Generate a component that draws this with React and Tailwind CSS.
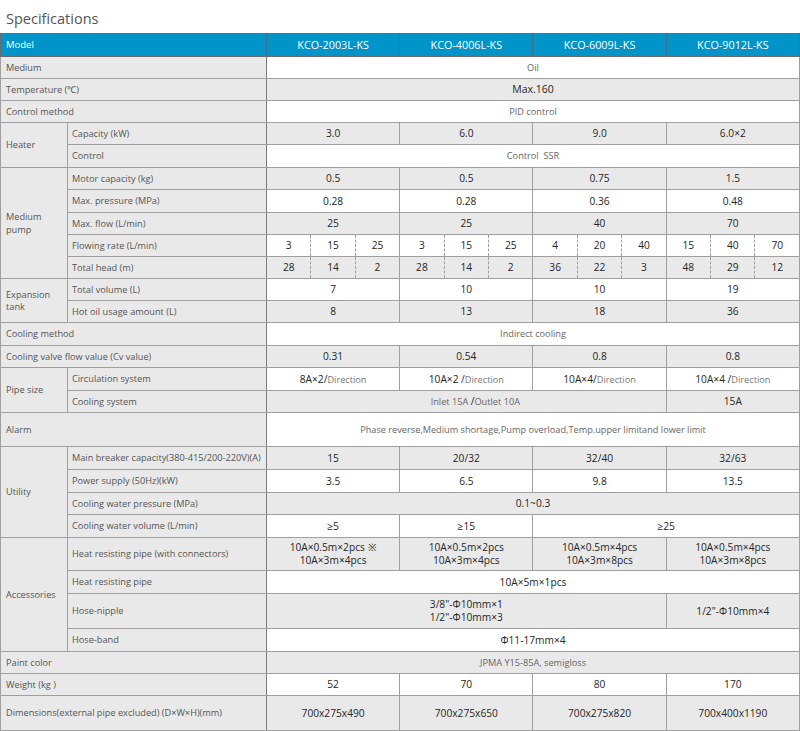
import React from "react";

const B = "border border-[#9f9f9f]";
const LBL = `${B} bg-[#e9e9e9] text-[#555] text-[9.2px] text-left align-middle p-0 pl-[5px] font-normal`;
const SUB = `${B} bg-[#e9e9e9] text-[#555] text-[9.2px] text-left align-middle p-0 pl-[4px] border-r-[#7a7a7a] font-normal`;
const LBL2 = `${LBL} border-r-[#7a7a7a]`;
const V = `${B} text-center align-middle p-0 text-[10.2px] text-[#262626]`;
const G = `${B} text-center align-middle p-0 text-[9.2px] text-[#666]`;

const W = "bg-white";
const GR = "bg-[#e9e9e9]";

function Vals({ vals, bg }) {
  return vals.map((v, i) => (
    <td key={i} colSpan={3} className={`${V} ${bg}`}>
      {v}
    </td>
  ));
}

function Sub3({ vals, bg }) {
  return vals.map((v, i) => {
    const pos = i % 3;
    const cls =
      pos === 0
        ? "[border-right-style:dashed]"
        : pos === 1
        ? "[border-left-style:dashed] [border-right-style:dashed]"
        : "[border-left-style:dashed]";
    return (
      <td key={i} className={`${V} ${bg} ${cls}`}>
        {v}
      </td>
    );
  });
}

function Dir({ a }) {
  return (
    <span>
      <span className="text-[#262626] text-[10.2px]">{a}</span>
      <span className="text-[#777] text-[9.2px]">Direction</span>
    </span>
  );
}

export default function App() {
  return (
    <div className="w-[800px] bg-white font-['Open_Sans',sans-serif] leading-[1.2]">
      <div className="h-[33px] pl-[6px] pt-[10px] text-[14.5px] leading-[18px] text-[#555]">
        Specifications
      </div>
      <table className="w-[800px] table-fixed border-collapse">
        <colgroup>
          <col className="w-[67px]" />
          <col className="w-[199px]" />
          {Array.from({ length: 12 }).map((_, i) => (
            <col key={i} />
          ))}
        </colgroup>
        <tbody>
          <tr className="h-[23px] bg-[#0094c9]">
            <th colSpan={2} className="border border-[#6b6b6b] border-r-[#3d6f86] text-left pl-[5px] text-[9.5px] font-normal text-white p-0">
              Model
            </th>
            {["KCO-2003L-KS", "KCO-4006L-KS", "KCO-6009L-KS", "KCO-9012L-KS"].map((m) => (
              <th key={m} colSpan={3} className="border border-[#6b6b6b] border-x-[#3d6f86] text-center text-[10.8px] font-normal text-white p-0">
                {m}
              </th>
            ))}
          </tr>
          <tr className="h-[22px]">
            <td colSpan={2} className={LBL2}>Medium</td>
            <td colSpan={12} className={`${G} ${W}`}>Oil</td>
          </tr>
          <tr className="h-[22px]">
            <td colSpan={2} className={LBL2}>Temperature (℃)</td>
            <td colSpan={12} className={`${V} ${GR} text-[10.5px]`}>Max.160</td>
          </tr>
          <tr className="h-[22px]">
            <td colSpan={2} className={LBL2}>Control method</td>
            <td colSpan={12} className={`${G} ${W}`}>PID control</td>
          </tr>
          <tr className="h-[22px]">
            <td rowSpan={2} className={LBL}>Heater</td>
            <td className={SUB}>Capacity (kW)</td>
            <Vals vals={["3.0", "6.0", "9.0", "6.0×2"]} bg={GR} />
          </tr>
          <tr className="h-[23px]">
            <td className={SUB}>Control</td>
            <td colSpan={12} className={`${G} ${W} whitespace-pre`}>Control  SSR</td>
          </tr>
          <tr className="h-[22px]">
            <td rowSpan={5} className={`${LBL} leading-[13px]`}>
              Medium
              <br />
              pump
            </td>
            <td className={SUB}>Motor capacity (kg)</td>
            <Vals vals={["0.5", "0.5", "0.75", "1.5"]} bg={GR} />
          </tr>
          <tr className="h-[23px]">
            <td className={SUB}>Max. pressure (MPa)</td>
            <Vals vals={["0.28", "0.28", "0.36", "0.48"]} bg={W} />
          </tr>
          <tr className="h-[22px]">
            <td className={SUB}>Max. flow (L/min)</td>
            <Vals vals={["25", "25", "40", "70"]} bg={GR} />
          </tr>
          <tr className="h-[22px]">
            <td className={SUB}>Flowing rate (L/min)</td>
            <Sub3 vals={["3", "15", "25", "3", "15", "25", "4", "20", "40", "15", "40", "70"]} bg={W} />
          </tr>
          <tr className="h-[22px]">
            <td className={SUB}>Total head (m)</td>
            <Sub3 vals={["28", "14", "2", "28", "14", "2", "36", "22", "3", "48", "29", "12"]} bg={GR} />
          </tr>
          <tr className="h-[22px]">
            <td rowSpan={2} className={`${LBL} leading-[12px]`}>
              Expansion
              <br />
              tank
            </td>
            <td className={SUB}>Total volume (L)</td>
            <Vals vals={["7", "10", "10", "19"]} bg={W} />
          </tr>
          <tr className="h-[22px]">
            <td className={SUB}>Hot oil usage amount (L)</td>
            <Vals vals={["8", "13", "18", "36"]} bg={GR} />
          </tr>
          <tr className="h-[23px]">
            <td colSpan={2} className={LBL2}>Cooling method</td>
            <td colSpan={12} className={`${G} ${W}`}>Indirect cooling</td>
          </tr>
          <tr className="h-[22px]">
            <td colSpan={2} className={LBL2}>Cooling valve flow value (Cv value)</td>
            <Vals vals={["0.31", "0.54", "0.8", "0.8"]} bg={GR} />
          </tr>
          <tr className="h-[23px]">
            <td rowSpan={2} className={LBL}>Pipe size</td>
            <td className={SUB}>Circulation system</td>
            <Vals
              vals={[<Dir a="8A×2/" />, <Dir a="10A×2 /" />, <Dir a="10A×4/" />, <Dir a="10A×4 /" />]}
              bg={W}
            />
          </tr>
          <tr className="h-[22px]">
            <td className={SUB}>Cooling system</td>
            <td colSpan={9} className={`${G} ${GR} pl-[18px]`}>
              Inlet 15A <span className="text-[#262626] text-[10.2px]">/</span>Outlet 10A
            </td>
            <td colSpan={3} className={`${V} ${GR}`}>15A</td>
          </tr>
          <tr className="h-[34px]">
            <td colSpan={2} className={LBL2}>Alarm</td>
            <td colSpan={12} className={`${G} ${W} text-[#444] text-[9.1px]`}>
              Phase reverse,Medium shortage,Pump overload,Temp.upper limitand lower limit
            </td>
          </tr>
          <tr className="h-[23px]">
            <td rowSpan={4} className={LBL}>Utility</td>
            <td className={`${SUB} text-[6.8px]`}>Main breaker capacity(380-415/200-220V)(A)</td>
            <Vals vals={["15", "20/32", "32/40", "32/63"]} bg={GR} />
          </tr>
          <tr className="h-[23px]">
            <td className={SUB}>Power supply (50Hz)(kW)</td>
            <Vals vals={["3.5", "6.5", "9.8", "13.5"]} bg={W} />
          </tr>
          <tr className="h-[22px]">
            <td className={SUB}>Cooling water pressure (MPa)</td>
            <td colSpan={12} className={`${V} ${GR}`}>0.1~0.3</td>
          </tr>
          <tr className="h-[23px]">
            <td className={SUB}>Cooling water volume (L/min)</td>
            <td colSpan={3} className={`${V} ${W}`}>≥5</td>
            <td colSpan={3} className={`${V} ${W}`}>≥15</td>
            <td colSpan={6} className={`${V} ${W}`}>≥25</td>
          </tr>
          <tr className="h-[33px]">
            <td rowSpan={4} className={LBL}>Accessories</td>
            <td className={SUB}>Heat resisting pipe (with connectors)</td>
            <Vals
              bg={GR}
              vals={[
                <div className="leading-[13px]">10A×0.5m×2pcs ※<br />10A×3m×4pcs</div>,
                <div className="leading-[13px]">10A×0.5m×2pcs<br />10A×3m×4pcs</div>,
                <div className="leading-[13px]">10A×0.5m×4pcs<br />10A×3m×8pcs</div>,
                <div className="leading-[13px]">10A×0.5m×4pcs<br />10A×3m×8pcs</div>,
              ]}
            />
          </tr>
          <tr className="h-[23px]">
            <td className={SUB}>Heat resisting pipe</td>
            <td colSpan={12} className={`${V} ${W}`}>10A×5m×1pcs</td>
          </tr>
          <tr className="h-[35px]">
            <td className={SUB}>Hose-nipple</td>
            <td colSpan={9} className={`${V} ${GR}`}>
              <div className="inline-block text-left leading-[13px]">
                3/8"-Φ10mm×1
                <br />
                1/2"-Φ10mm×3
              </div>
            </td>
            <td colSpan={3} className={`${V} ${GR}`}>1/2"-Φ10mm×4</td>
          </tr>
          <tr className="h-[23px]">
            <td className={SUB}>Hose-band</td>
            <td colSpan={12} className={`${V} ${W}`}>Φ11-17mm×4</td>
          </tr>
          <tr className="h-[22px]">
            <td colSpan={2} className={LBL2}>Paint color</td>
            <td colSpan={12} className={`${G} ${GR}`}>JPMA Y15-85A, semigloss</td>
          </tr>
          <tr className="h-[22px]">
            <td colSpan={2} className={LBL2}>Weight (kg )</td>
            <Vals vals={["52", "70", "80", "170"]} bg={W} />
          </tr>
          <tr className="h-[35px]">
            <td colSpan={2} className={LBL2}>Dimensions(external pipe excluded) (D×W×H)(mm)</td>
            <Vals vals={["700x275x490", "700x275x650", "700x275x820", "700x400x1190"]} bg={GR} />
          </tr>
        </tbody>
      </table>
    </div>
  );
}
